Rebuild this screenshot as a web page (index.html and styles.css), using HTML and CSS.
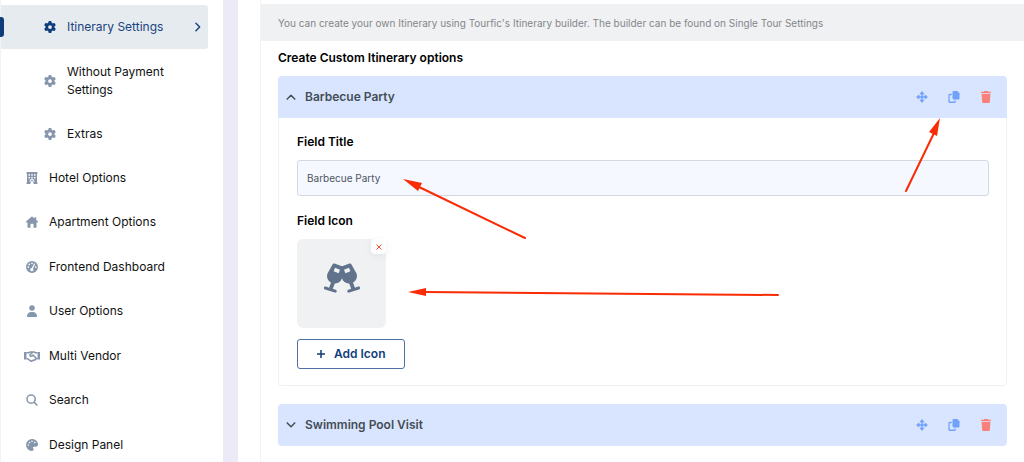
FILE: index.html
```html
<!DOCTYPE html>
<html lang="en">
<head>
<meta charset="utf-8">
<meta name="viewport" content="width=device-width, initial-scale=1">
<title>Itinerary Settings</title>
<link rel="stylesheet" href="styles.css">
</head>
<body>
<svg class="sprite" aria-hidden="true">
  <symbol id="gear" viewBox="0 0 512 512"><path d="M495.9 166.6c3.2 8.7 .5 18.4-6.4 24.6l-43.3 39.4c1.1 8.3 1.7 16.8 1.7 25.4s-.6 17.1-1.7 25.4l43.3 39.4c6.9 6.2 9.6 15.9 6.4 24.6c-4.4 11.9-9.7 23.3-15.8 34.3l-4.7 8.1c-6.6 11-14 21.4-22.1 31.2c-5.9 7.2-15.7 9.6-24.5 6.8l-55.7-17.7c-13.4 10.3-28.2 18.9-44 25.4l-12.5 57.1c-2 9.1-9 16.3-18.2 17.8c-13.8 2.3-28 3.5-42.5 3.5s-28.7-1.2-42.5-3.5c-9.2-1.5-16.2-8.7-18.2-17.8l-12.5-57.1c-15.8-6.5-30.6-15.1-44-25.4L83.1 425.9c-8.8 2.8-18.6 .3-24.5-6.8c-8.1-9.8-15.5-20.2-22.1-31.2l-4.7-8.1c-6.1-11-11.4-22.4-15.8-34.3c-3.2-8.7-.5-18.4 6.4-24.6l43.3-39.4C64.6 273.1 64 264.6 64 256s.6-17.1 1.7-25.4L22.4 191.2c-6.9-6.2-9.6-15.9-6.4-24.6c4.4-11.9 9.7-23.3 15.8-34.3l4.7-8.1c6.6-11 14-21.4 22.1-31.2c5.9-7.2 15.7-9.6 24.5-6.8l55.7 17.7c13.4-10.3 28.2-18.9 44-25.4l12.5-57.1c2-9.1 9-16.3 18.2-17.8C227.3 1.2 241.5 0 256 0s28.7 1.2 42.5 3.5c9.2 1.5 16.2 8.7 18.2 17.8l12.5 57.1c15.8 6.5 30.6 15.1 44 25.4l55.7-17.7c8.8-2.8 18.6-.3 24.5 6.8c8.1 9.8 15.5 20.2 22.1 31.2l4.7 8.1c6.1 11 11.4 22.4 15.8 34.3zM256 336a80 80 0 1 0 0-160 80 80 0 1 0 0 160z"/></symbol>
  <symbol id="hotel" viewBox="0 0 24 24"><path fill-rule="evenodd" d="M1 0h22v3h-1v18h1v3h-8v-3a3 3 0 0 0-6 0v3H1v-3h1V3H1zM5 4.500v3h3v-3zm5.500 0v3h3v-3zm5.500 0v3h3v-3zM5 10v3h3v-3zm5.500 0v3h3v-3zm5.500 0v3h3v-3zM7 19h2a3 3 0 0 1 6 0h2a5 5 0 0 0-10 0z"/></symbol>
  <symbol id="house" viewBox="0 0 24 24"><path d="M11 1.300a1.500 1.500 0 0 1 2 0l4 3.500V2.500h3.500v5.300l3 2.700c1 1 .4 2.500-.9 2.500H21v9a1.500 1.500 0 0 1-1.500 1.500H15V16.500a1 1 0 0 0-1-1h-4a1 1 0 0 0-1 1v7H4.500A1.500 1.500 0 0 1 3 22v-9H1.400c-1.300 0-1.900-1.500-.9-2.500z"/></symbol>
  <symbol id="gauge" viewBox="0 0 24 24"><path fill-rule="evenodd" d="M12 0a12 12 0 1 1 0 24 12 12 0 0 1 0-24zm0 3a1.700 1.700 0 1 0 0 3.400A1.700 1.700 0 0 0 12 3zM6.500 5.200a1.700 1.700 0 1 0 0 3.400 1.700 1.700 0 0 0 0-3.400zM4.500 10.500a1.700 1.700 0 1 0 0 3.400 1.700 1.700 0 0 0 0-3.400zM19.500 10.500a1.700 1.700 0 1 0 0 3.400 1.700 1.700 0 0 0 0-3.400zM16 5.500 11.800 14A3.200 3.200 0 1 0 14 15l4-8.500c.5-1.300-1.400-2.200-2-1z"/></symbol>
  <symbol id="user" viewBox="0 0 24 24"><circle cx="12" cy="6" r="5.500"/><path d="M2 23c0-6 4-9 8-9h4c4 0 8 3 8 9a1 1 0 0 1-1 1H3a1 1 0 0 1-1-1z"/></symbol>
  <symbol id="handshake" viewBox="0 0 32 24"><path d="M0 4h5v15H0zM27 4h5v15h-5z"/><path d="M5 5.500h4l4-1.500h7l3 1.500h4M5 17.500h2.500l5 4c1.500 1 3 .7 4-.5 1.500.7 3 0 3.500-1.200 1.700.3 3-.5 3.300-2.300H27M17 5l-5 4.500c-1 2.500 2 4 4 2.300l2-1.800 6.500 6.500" fill="none" stroke="currentColor" stroke-width="3.200" stroke-linejoin="round"/></symbol>
  <symbol id="search" viewBox="0 0 24 24"><path d="M18.500 10.200a8.300 8.300 0 1 1-16.600 0 8.300 8.300 0 0 1 16.600 0zM16.200 16.300l6.600 6.600" fill="none" stroke="currentColor" stroke-width="3"/></symbol>
  <symbol id="palette" viewBox="0 0 24 24"><path fill-rule="evenodd" d="M12 0c6.600 0 12 4.900 12 11 0 3-2.500 4.500-5 4.500h-3c-2.200 0-2.600 1.600-1.500 3 1.700 2.500.3 5.500-2.500 5.500A12 12 0 0 1 12 0zM4.500 10.500a1.600 1.600 0 1 0 0 3.200 1.600 1.600 0 0 0 0-3.200zM7 5.500a1.600 1.600 0 1 0 0 3.200 1.600 1.600 0 0 0 0-3.200zM12 3a1.600 1.600 0 1 0 0 3.200A1.600 1.600 0 0 0 12 3zM17.500 5.500a1.600 1.600 0 1 0 0 3.200 1.600 1.600 0 0 0 0-3.200z"/></symbol>
  <symbol id="move" viewBox="0 0 24 24"><path d="M12 4v16M4 12h16" stroke="currentColor" stroke-width="3"/><path d="M12 1l4 5h-8zM12 23l4-5h-8zM1 12l5-4v8zM23 12l-5-4v8z" stroke="currentColor" stroke-width="1.500" stroke-linejoin="round"/></symbol>
  <symbol id="copy" viewBox="0 0 24 24"><path d="M11 0h7.500L23 4.500V15a2 2 0 0 1-2 2H11a2 2 0 0 1-2-2V2a2 2 0 0 1 2-2z"/><path d="M7.500 7H3.500a1.500 1.500 0 0 0-1.500 1.500v12.500A1.500 1.500 0 0 0 3.500 22.500h9.500a1.500 1.500 0 0 0 1.500-1.500v-2" fill="none" stroke="currentColor" stroke-width="2.600"/></symbol>
  <symbol id="trash" viewBox="0 0 24 24"><path d="M8.500 0h7l1.200 1.500H22V4H2V1.500h5.300zM3.200 5.500h17.600L19.700 22a2 2 0 0 1-2 2H6.300a2 2 0 0 1-2-2z"/></symbol>
  <symbol id="chevron" viewBox="0 0 12 12"><path d="M1.500 3.500 6 8l4.500-4.500" fill="none" stroke="currentColor" stroke-width="1.800" stroke-linecap="round" stroke-linejoin="round"/></symbol>
  <symbol id="glasses" viewBox="0 0 38 32">
    <path id="glass" fill-rule="evenodd" d="M9.500 1.600c.4-1 1-1.300 2-1l7.500 2.700v12c-1 3.500-3.900 5.400-7.200 5.200l-2 5.200 2.800 1c2 .9 1.200 3.400-.8 2.900L2 26.500c-2-.8-1.100-3.500.9-2.900l3.200 1.100 1.900-5.200C4.500 17.500 3.300 14 4.500 10.500zM12 4.800l-1.400 3.500 5 1.900L17 6.700z"/>
    <use href="#glass" transform="matrix(-1 0 0 1 38 0)"/>
  </symbol>
</svg>

<div class="app">
  <nav class="sidebar" aria-label="Settings">
    <ul class="menu submenu">
      <li><a class="item active" href="#itinerary" aria-current="page"><svg class="icon"><use href="#gear"/></svg><span>Itinerary Settings</span><svg class="chevron next"><use href="#chevron"/></svg></a></li>
      <li><a class="item" href="#payment"><svg class="icon"><use href="#gear"/></svg><span>Without Payment Settings</span></a></li>
      <li><a class="item" href="#extras"><svg class="icon"><use href="#gear"/></svg><span>Extras</span></a></li>
    </ul>
    <ul class="menu mainmenu">
      <li><a class="item" href="#hotel-options"><svg class="icon"><use href="#hotel"/></svg><span>Hotel Options</span></a></li>
      <li><a class="item" href="#apartment"><svg class="icon"><use href="#house"/></svg><span>Apartment Options</span></a></li>
      <li><a class="item" href="#dashboard"><svg class="icon"><use href="#gauge"/></svg><span>Frontend Dashboard</span></a></li>
      <li><a class="item" href="#users"><svg class="icon"><use href="#user"/></svg><span>User Options</span></a></li>
      <li><a class="item" href="#vendor"><svg class="icon wide"><use href="#handshake"/></svg><span>Multi Vendor</span></a></li>
      <li><a class="item" href="#search-options"><svg class="icon"><use href="#search"/></svg><span>Search</span></a></li>
      <li><a class="item" href="#design"><svg class="icon"><use href="#palette"/></svg><span>Design Panel</span></a></li>
    </ul>
  </nav>

  <main class="content">
    <p class="notice">You can create your own Itinerary using Tourfic's Itinerary builder. The builder can be found on Single Tour Settings</p>
    <div class="options">
      <h2 class="title">Create Custom Itinerary options</h2>

      <section class="panel open">
        <header class="panel-head">
          <button class="toggle" type="button" aria-expanded="true"><svg class="chevron up"><use href="#chevron"/></svg><span>Barbecue Party</span></button>
          <div class="actions">
            <button type="button" aria-label="Move"><svg class="icon"><use href="#move"/></svg></button>
            <button type="button" aria-label="Duplicate"><svg class="icon"><use href="#copy"/></svg></button>
            <button class="delete" type="button" aria-label="Delete"><svg class="icon"><use href="#trash"/></svg></button>
          </div>
          <svg class="pointer to-copy" viewBox="0 0 40 80" aria-hidden="true"><path class="shaft" d="M4 76 32 18"/><path d="M38 3 35 21 27 17z"/></svg>
        </header>
        <div class="panel-body">
          <div class="field">
            <label for="field-title">Field Title</label>
            <input id="field-title" type="text" value="Barbecue Party">
            <svg class="pointer to-title" viewBox="0 0 126 62" aria-hidden="true"><path class="shaft" d="M123 60 15 8"/><path d="M1 1 20 5 16 13z"/></svg>
          </div>
          <div class="field">
            <span class="label">Field Icon</span>
            <div class="preview">
              <svg class="glasses" role="img" aria-label="Champagne glasses"><use href="#glasses"/></svg>
              <button class="remove" type="button" aria-label="Remove icon"><svg viewBox="0 0 8 8"><path d="M1.500 1.500l5 5M6.500 1.500l-5 5"/></svg></button>
              <svg class="pointer to-icon" viewBox="0 0 372 12" aria-hidden="true"><path class="shaft" d="M371 8 18 5"/><path d="M1 5 19 1V9z"/></svg>
            </div>
            <button class="add" type="button"><svg viewBox="0 0 10 10"><path d="M5 1v8M1 5h8"/></svg>Add Icon</button>
          </div>
        </div>
      </section>

      <section class="panel">
        <header class="panel-head">
          <button class="toggle" type="button" aria-expanded="false"><svg class="chevron"><use href="#chevron"/></svg><span>Swimming Pool Visit</span></button>
          <div class="actions">
            <button type="button" aria-label="Move"><svg class="icon"><use href="#move"/></svg></button>
            <button type="button" aria-label="Duplicate"><svg class="icon"><use href="#copy"/></svg></button>
            <button class="delete" type="button" aria-label="Delete"><svg class="icon"><use href="#trash"/></svg></button>
          </div>
        </header>
      </section>
    </div>
  </main>
</div>
</body>
</html>
```
FILE: styles.css
```css
* { box-sizing: border-box; }

body {
  margin: 0;
  background: #fff;
  color: #111;
  font: 12px/18px Inter, "Liberation Sans", sans-serif;
}

button, input { font: inherit; }

button {
  padding: 0;
  border: 0;
  background: none;
  color: inherit;
  cursor: pointer;
}

svg { display: block; fill: currentColor; flex: none; }

.sprite { position: absolute; width: 0; height: 0; }
.icon { width: 12px; height: 12px; }
.icon.wide { width: 16px; margin: 0 -2px; }
.chevron { width: 10px; height: 10px; }
.chevron.up { transform: rotate(180deg); }
.chevron.next { margin-left: auto; transform: rotate(-90deg); }

.app {
  display: flex;
  min-height: 100vh;
}

/* Sidebar */
.sidebar {
  flex: none;
  width: 238px;
  padding: 5px 15px 0 0;
  border-left: 1px solid #f3f3f5;
  border-right: 15px solid #eceaf7;
}

.menu { margin: 0; padding: 0; list-style: none; }

.item {
  position: relative;
  display: flex;
  align-items: center;
  gap: 11px;
  padding: 13px 40px 13px 25px;
  color: #111;
  text-decoration: none;
}

.item .icon { color: #8696ad; }
.submenu .item { padding-left: 43px; }

.submenu .active {
  margin-bottom: 1px;
  padding-right: 5px;
  border-radius: 0 3px 3px 0;
  background: #e6ebef;
  color: #1b4480;
}

.active .icon { color: #0f3d7c; }

.active::before {
  content: "";
  position: absolute;
  left: -1px;
  top: 12px;
  width: 4px;
  height: 20px;
  border-radius: 0 3px 3px 0;
  background: #0f3d7c;
}

.mainmenu li:nth-child(odd) { margin-top: 1px; }
.mainmenu li:first-child { margin-top: 0; }

/* Content */
.content {
  flex: 1;
  min-width: 0;
  margin-left: 22px;
  padding-top: 4px;
  border-left: 1px solid #f3f3f5;
}

.notice {
  margin: 0;
  padding: 10px 17px 9px;
  background: #f0f1f3;
  color: #85868a;
  font-size: 10px;
}

.options { padding: 8px 17px 16px; }

.title {
  margin: 0 0 9px;
  color: #000;
  font-size: 12px;
  font-weight: 600;
}

.panel {
  margin-bottom: 18px;
  border-radius: 4px;
}

.panel-head {
  position: relative;
  display: flex;
  align-items: center;
  justify-content: space-between;
  height: 42px;
  padding: 0 15px 0 8px;
  border-radius: 4px;
  background: #d9e5fe;
}

.open .panel-head { border-radius: 4px 4px 0 0; }

.toggle {
  display: flex;
  align-items: center;
  gap: 9px;
  color: #434d57;
  font-weight: 600;
}

.actions {
  display: flex;
  gap: 20px;
  color: #70a2fc;
}

.actions .delete { color: #f9817c; }

.panel-body {
  padding: 15px 17px 16px 18px;
  border: 1px solid #f1f1f3;
  border-top: 0;
  border-radius: 0 0 4px 4px;
}

.field { position: relative; }
.field + .field { margin-top: 16px; }

.field label, .label {
  display: block;
  margin-bottom: 9px;
  color: #000;
  font-weight: 600;
}

.field input {
  display: block;
  width: 100%;
  height: 36px;
  padding: 0 9px;
  border: 1px solid #d3d9e3;
  border-radius: 3px;
  background: #f5f8fe;
  color: #4b5461;
  font-size: 10px;
}

.preview {
  position: relative;
  display: grid;
  justify-content: center;
  width: 89px;
  height: 89px;
  padding-top: 24px;
  border-radius: 6px;
  background: #f0f1f3;
  color: #61738c;
}

.glasses { width: 38px; height: 32px; }

.remove {
  position: absolute;
  top: 0;
  right: 0;
  display: grid;
  place-items: center;
  width: 15px;
  height: 15px;
  border-radius: 4px;
  background: #fff;
  box-shadow: 0 2px 8px rgba(0, 0, 0, 0.06);
  color: #f0483e;
}

.remove svg { width: 8px; height: 8px; stroke: currentColor; }

.add {
  display: inline-flex;
  align-items: center;
  gap: 8px;
  margin-top: 11px;
  padding: 5px 18px;
  border: 1px solid #4c70a3;
  border-radius: 3px;
  color: #0f3d7c;
  font-weight: 600;
}

.add svg { width: 10px; height: 10px; stroke: currentColor; stroke-width: 1.5; }

/* Annotation arrows laid over the form */
.pointer {
  position: absolute;
  z-index: 1;
  color: #fa2c05;
  pointer-events: none;
}

.shaft { stroke: currentColor; stroke-width: 2; stroke-linecap: round; }
.to-copy { top: 39px; right: 65px; width: 40px; height: 80px; }
.to-title { top: 45px; left: 105px; width: 126px; height: 62px; }
.to-icon { top: 48px; left: 110px; width: 372px; height: 12px; }
```
